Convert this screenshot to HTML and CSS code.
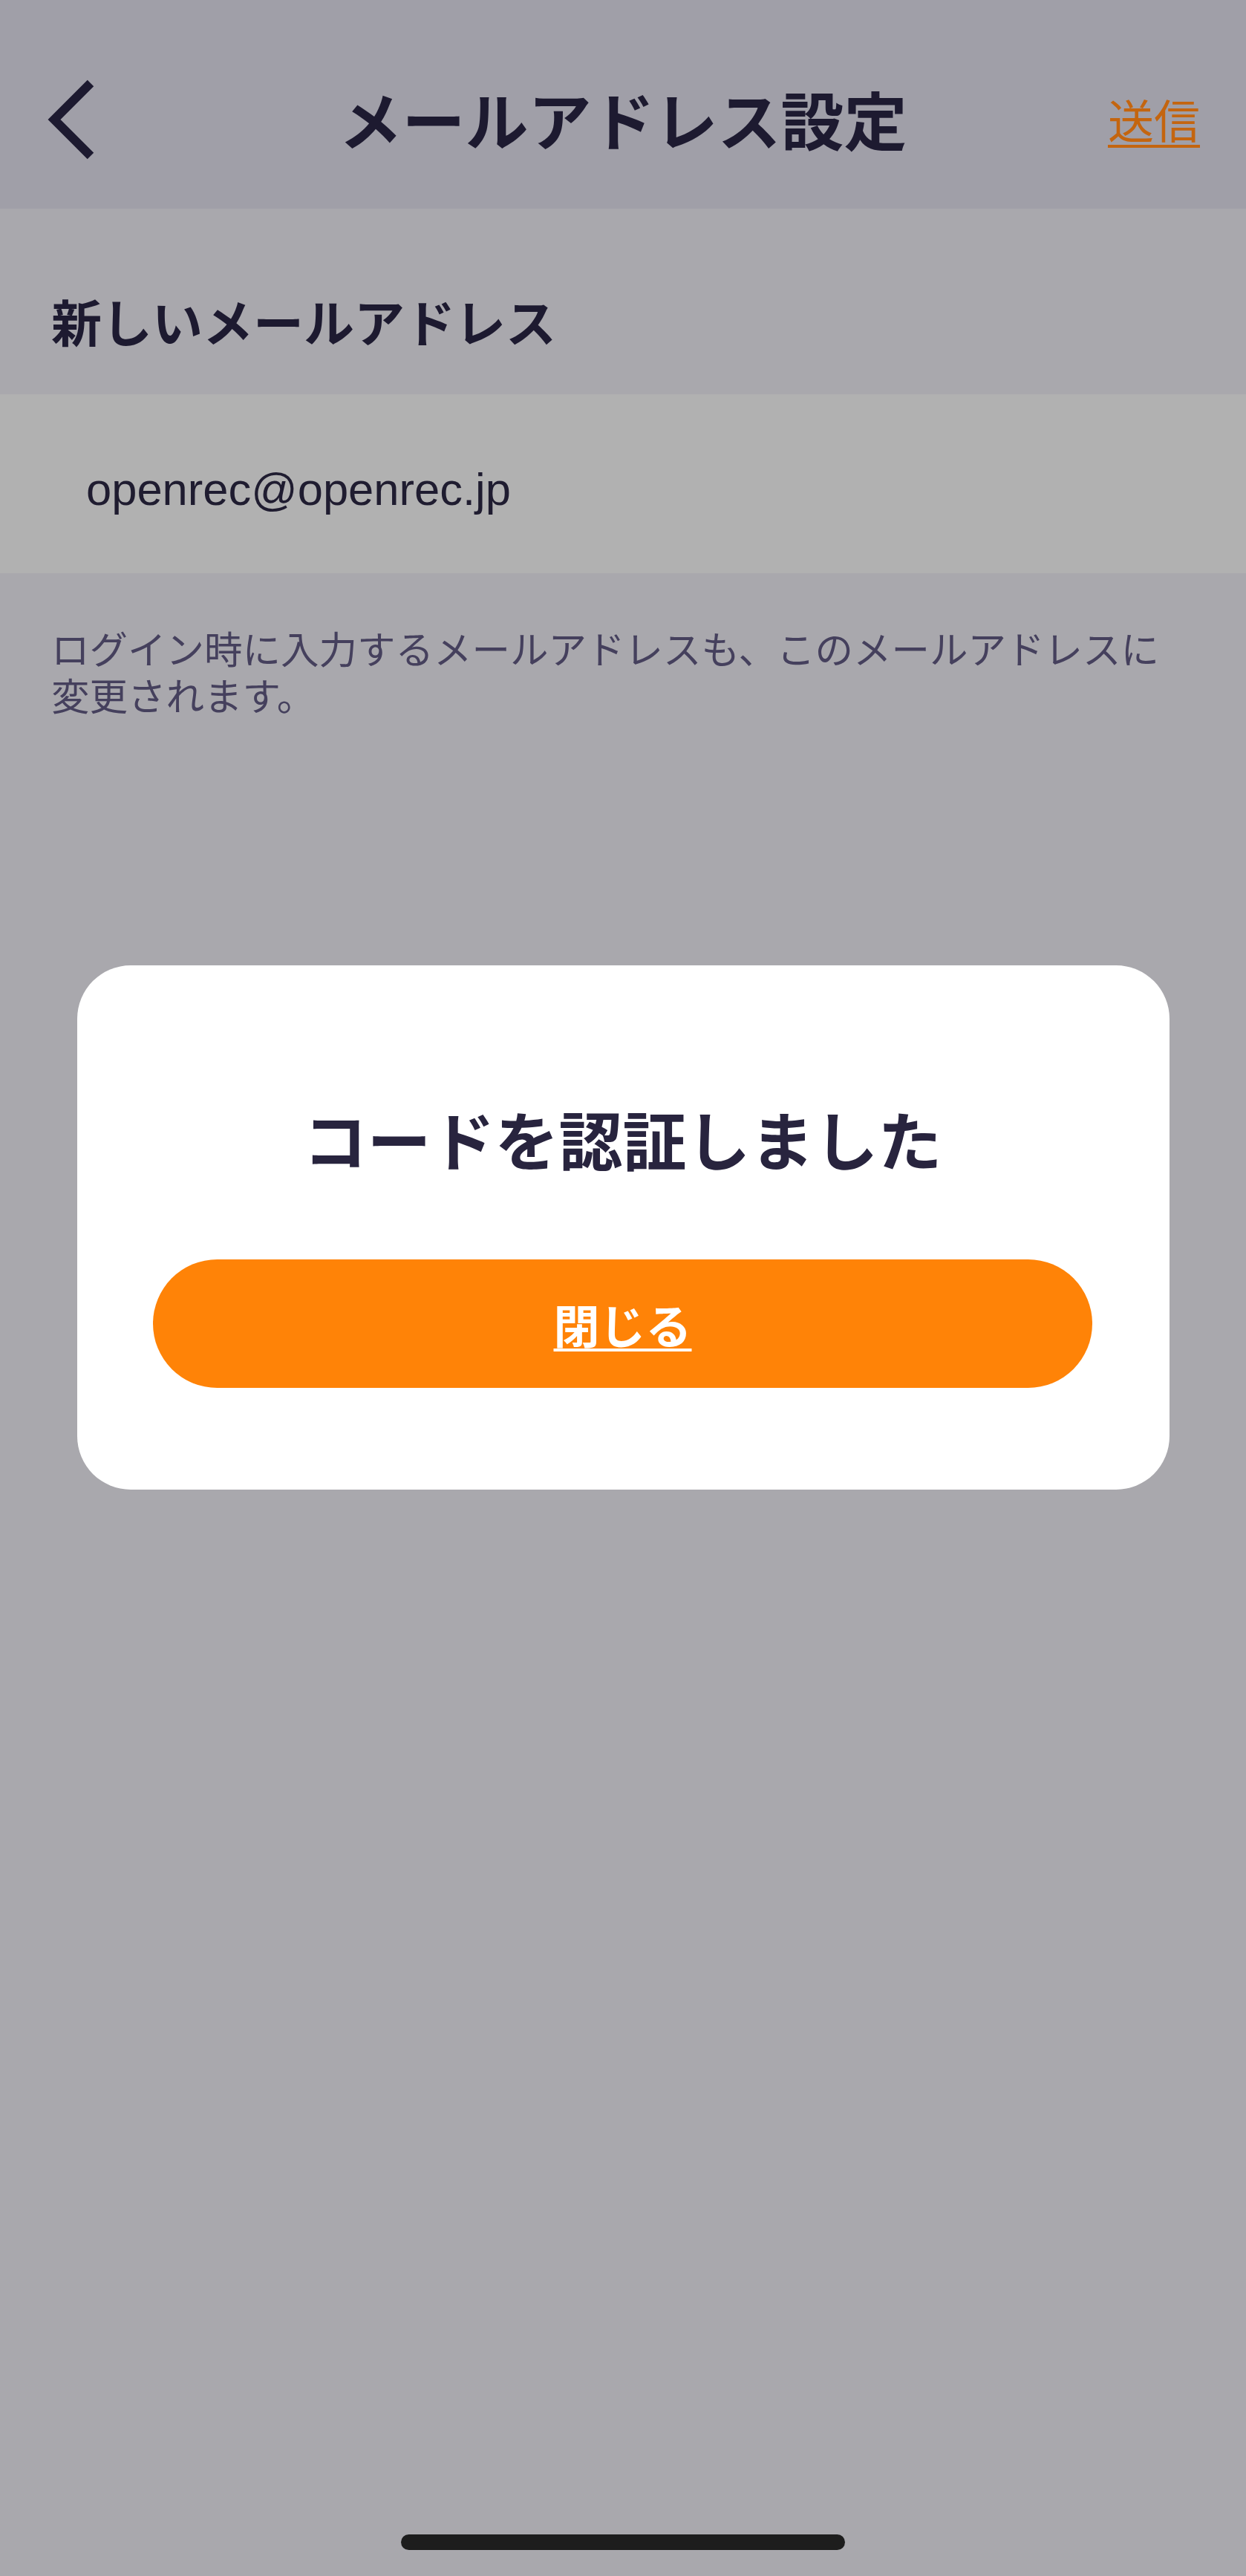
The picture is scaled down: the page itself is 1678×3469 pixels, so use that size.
FILE: index.html
```html
<!DOCTYPE html>
<html lang="ja">
<head>
<meta charset="utf-8">
<title>メールアドレス設定</title>
<link rel="stylesheet" href="styles.css">
</head>
<body>
<div class="screen">
  <header class="nav">
    <div class="nav-left">
      <svg class="back" width="80" height="120" viewBox="0 0 80 120" aria-hidden="true">
        <path d="M68 10 L19 59 L68 108" fill="none" stroke="#1d1a30" stroke-width="12" stroke-linecap="butt" stroke-linejoin="miter"/>
      </svg>
    </div>
    <h1 class="nav-title">メールアドレス設定</h1>
    <div class="nav-right"><span class="send">送信</span></div>
  </header>

  <section class="section-head">新しいメールアドレス</section>
  <div class="input-row"><span class="email">openrec@openrec.jp</span></div>
  <p class="note">ログイン時に入力するメールアドレスも、このメールアドレスに変更されます。</p>

  <div class="dialog">
    <h2 class="dialog-title">コードを認証しました</h2>
    <button class="dialog-btn" type="button"><span>閉じる</span></button>
  </div>

  <div class="home-indicator"></div>
</div>
</body>
</html>
```

FILE: styles.css
```css
html, body {
  margin: 0;
  padding: 0;
}
body {
  background: #a9a8ad;
  font-family: "Noto Sans CJK JP", "Noto Sans", sans-serif;
}
.screen {
  position: relative;
  width: 1678px;
  height: 3469px;
  background: #a9a8ad;
  overflow: hidden;
}
.nav {
  height: 281px;
  box-sizing: border-box;
  padding-top: 43px;
  background: #a09fa8;
  display: grid;
  grid-template-columns: 1fr auto 1fr;
  align-items: center;
}
.nav-left {
  padding-left: 54px;
  display: flex;
  align-items: center;
}
.back {
  display: block;
}
.nav-title {
  margin: 0 0 8px;
  font-size: 85px;
  line-height: 85px;
  font-weight: 700;
  color: #1d1a30;
}
.nav-right {
  display: flex;
  justify-content: flex-end;
  padding-right: 62px;
  padding-bottom: 4px;
}
.send {
  font-size: 62px;
  line-height: 62px;
  color: #c4650f;
  text-decoration: underline;
  text-decoration-thickness: 4px;
  text-underline-offset: 8px;
}
.section-head {
  height: 250px;
  box-sizing: border-box;
  padding: 117px 0 0 69px;
  font-size: 68px;
  line-height: 68px;
  font-weight: 700;
  color: #1d1a30;
}
.input-row {
  height: 241px;
  box-sizing: border-box;
  padding: 15px 0 0 116px;
  background: #b1b1b1;
  display: flex;
  align-items: center;
}
.email {
  font-family: "Liberation Sans", Arial, sans-serif;
  font-size: 61.5px;
  line-height: 62px;
  color: #1f1c30;
}
.note {
  margin: 0;
  padding: 68px 100px 0 69px;
  font-size: 51.5px;
  line-height: 63px;
  color: #45405d;
}
.dialog {
  position: absolute;
  top: 1300px;
  left: 104px;
  width: 1471px;
  height: 706px;
  box-sizing: border-box;
  padding: 191px 104px 0 102px;
  background: #ffffff;
  border-radius: 72px;
  display: flex;
  flex-direction: column;
  align-items: stretch;
}
.dialog-title {
  margin: 0;
  text-align: center;
  font-size: 86px;
  line-height: 84px;
  font-weight: 700;
  color: #28243e;
}
.dialog-btn {
  margin-top: 121px;
  height: 173px;
  border: 0;
  border-radius: 87px;
  background: #ff8307;
  color: #ffffff;
  font-family: "Noto Sans CJK JP", "Noto Sans", sans-serif;
  font-size: 62px;
  font-weight: 700;
  line-height: 62px;
  padding: 0;
  display: flex;
  align-items: center;
  justify-content: center;
}
.dialog-btn span {
  text-decoration: underline;
  text-decoration-thickness: 4px;
  text-underline-offset: 6px;
}
.home-indicator {
  position: absolute;
  top: 3413px;
  left: 540px;
  width: 598px;
  height: 21px;
  border-radius: 11px;
  background: #1d1d1d;
}
```
